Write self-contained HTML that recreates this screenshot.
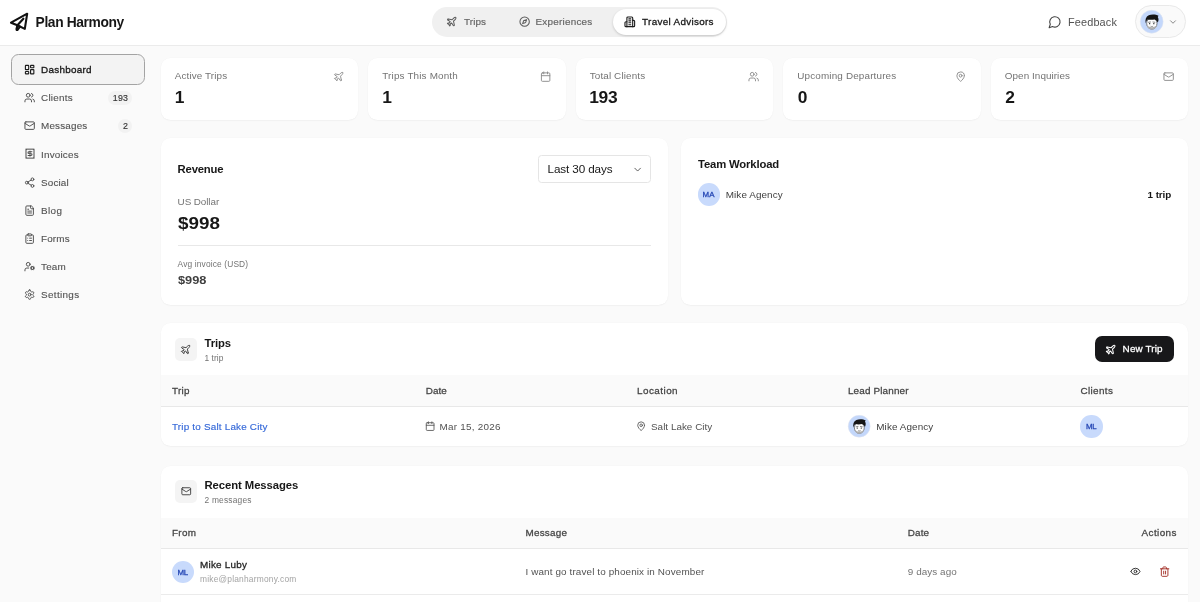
<!DOCTYPE html>
<html lang="en"><head><meta charset="utf-8"><title>Plan Harmony – Dashboard</title><style>
*{box-sizing:border-box;margin:0;padding:0}
html,body{width:1200px;height:602px;overflow:hidden}
body{background:#fafafa;font-family:"Liberation Sans", sans-serif;position:relative;color:#171717;-webkit-font-smoothing:antialiased}
header{position:absolute;left:0;top:0;width:1200px;height:45.6px;background:#fff;border-bottom:1px solid #ebebeb}
aside,main,nav{position:absolute;left:0;top:0;width:0;height:0}
#app{position:absolute;left:0;top:0;width:1200px;height:602px;will-change:transform}
.abs,.ic,.t{position:absolute;display:block}
.ic{overflow:visible}
.t{white-space:nowrap;line-height:1;font-weight:400;text-decoration:none}
a{color:inherit;text-decoration:none}
</style></head>
<body>
<div id="app">
<header><svg class="ic" style="left:0;top:0;width:45px;height:45px;color:#111" viewBox="0 0 45 45" fill="none" stroke="currentColor" stroke-width="2.1" stroke-linecap="round" stroke-linejoin="round"><path d="M27.200 13.700 11 22.700 17.400 25.300 24.800 28.900Z"/><path d="M23.400 18.700 17.400 25.300"/><path d="M17.400 25.300 16.500 29c-.100 1 .600 1.300 1.200.700l2.300-3"/></svg><strong class="t" style="left:35.60px;top:16.02px;font-size:13.8px;color:#171717;font-weight:700;letter-spacing:-0.382px;">Plan Harmony</strong><div class="abs" style="left:432.00px;top:6.50px;width:295.00px;height:30.40px;border-radius:15.2px;background:#f0f0f0"></div><nav><svg class="ic" style="left:446.00px;top:16.00px;width:11.25px;height:11.25px;color:#5a5a5a" viewBox="0 0 24 24" fill="none" stroke="currentColor" stroke-width="2.2" stroke-linecap="round" stroke-linejoin="round"><path d="M17.800 19.200 16 11l3.500-3.500C21 6 21.500 4 21 3c-1-.500-3 0-4.500 1.500L13 8 4.800 6.200c-.500-.100-.900.100-1.100.500l-.300.500c-.200.500-.100 1 .300 1.300L9 12l-2 3H4l-1 1 3 2 2 3 1-1v-3l3-2 3.500 5.300c.300.400.800.500 1.300.300l.500-.200c.400-.300.600-.700.500-1.200z"/></svg><span class="t" style="left:464.00px;top:17.02px;font-size:9.9px;color:#666;letter-spacing:0.115px;-webkit-text-stroke:0.18px currentColor;">Trips</span><svg class="ic" style="left:518.60px;top:16.00px;width:11.25px;height:11.25px;color:#5a5a5a" viewBox="0 0 24 24" fill="none" stroke="currentColor" stroke-width="2.2" stroke-linecap="round" stroke-linejoin="round"><circle cx="12" cy="12" r="10"/><path d="m16.240 7.760-1.804 5.411a2 2 0 0 1-1.265 1.265L7.760 16.240l1.804-5.411a2 2 0 0 1 1.265-1.265z"/></svg><span class="t" style="left:535.50px;top:17.02px;font-size:9.9px;color:#666;letter-spacing:0.240px;-webkit-text-stroke:0.18px currentColor;">Experiences</span><div class="abs" style="left:612.50px;top:8.50px;width:113.20px;height:26.20px;border-radius:13.1px;background:#fff;box-shadow:0 1px 2.5px rgba(0,0,0,.18)"></div><svg class="ic" style="left:624.40px;top:15.90px;width:11.60px;height:11.60px;color:#1c1c1c" viewBox="0 0 24 24" fill="none" stroke="currentColor" stroke-width="2.3" stroke-linecap="round" stroke-linejoin="round"><path d="M6 22V4a2 2 0 0 1 2-2h8a2 2 0 0 1 2 2v18Z"/><path d="M6 12H4a2 2 0 0 0-2 2v6a2 2 0 0 0 2 2h2"/><path d="M18 9h2a2 2 0 0 1 2 2v9a2 2 0 0 1-2 2h-2"/><path d="M10 6h4"/><path d="M10 10h4"/><path d="M10 14h4"/><path d="M10 18h4"/></svg><span class="t" style="left:642.10px;top:17.02px;font-size:9.9px;color:#171717;letter-spacing:0.304px;-webkit-text-stroke:0.3px currentColor;">Travel Advisors</span></nav><svg class="ic" style="left:1047.50px;top:15.00px;width:13.80px;height:13.80px;color:#444" viewBox="0 0 24 24" fill="none" stroke="currentColor" stroke-width="1.9" stroke-linecap="round" stroke-linejoin="round"><path d="M7.900 20A9 9 0 1 0 4 16.100L2 22Z"/></svg><span class="t" style="left:1068.00px;top:17.02px;font-size:10.9px;color:#525252;letter-spacing:0.145px;">Feedback</span><div class="abs" style="left:1135.30px;top:5.30px;width:50.60px;height:32.60px;border-radius:16.3px;background:#fafafa;border:1px solid #e9e9e9"></div><svg class="ic" style="left:1139.80px;top:9.80px;width:23.40px;height:23.40px" viewBox="0 0 48 48"><circle cx="24" cy="24" r="23.500" fill="#c3d7fb" stroke="#e3e6ee" stroke-width="1"/><ellipse cx="24.300" cy="27.500" rx="10.600" ry="11.800" fill="#fdfdfd" stroke="#3a3a3a" stroke-width="1.300"/><path d="M13.600 30c.500 7 5.500 10 10.700 10s10.200-3 10.700-10c-2 4-6 5.500-10.700 5.500S15.600 34 13.600 30z" fill="#b0b0b0"/><path d="M11.800 27.500C10 20 12 13.500 18 10.800c6-2.300 15-1.800 20 1.200l-1.600 2.200c2.200 3 2.200 8-.200 11.300-1.700-3.200-3.700-5.200-6-6-5 .800-10.700.800-14.500 0-2 1.700-3 4.500-3.900 8z" fill="#151515"/><circle cx="19.800" cy="28" r="1.400" fill="#222"/><circle cx="28.400" cy="28" r="1.400" fill="#222"/><path d="M17.500 25.200l4-.600M26.500 24.600l4 .600" stroke="#222" stroke-width="1.100" stroke-linecap="round" fill="none"/><path d="M22.300 33.600c1.300.700 2.800.700 4 0" stroke="#444" stroke-width="1.100" fill="none" stroke-linecap="round"/></svg><svg class="ic" style="left:1168.05px;top:16.60px;width:10.00px;height:10.00px;color:#6a6a6a" viewBox="0 0 24 24" fill="none" stroke="currentColor" stroke-width="1.9" stroke-linecap="round" stroke-linejoin="round"><path d="m6 9 6 6 6-6"/></svg></header>
<aside><div class="abs" style="left:10.70px;top:54.30px;width:134.80px;height:30.40px;border-radius:7.5px;background:#f3f3f3;border:1.4px solid #a3a3a3"></div><a><svg class="ic" style="left:23.90px;top:64.00px;width:11.25px;height:11.25px;color:#1c1c1c" viewBox="0 0 24 24" fill="none" stroke="currentColor" stroke-width="2.4" stroke-linecap="round" stroke-linejoin="round"><rect width="7" height="9" x="3" y="3" rx="1"/><rect width="7" height="5" x="14" y="3" rx="1"/><rect width="7" height="9" x="14" y="12" rx="1"/><rect width="7" height="5" x="3" y="16" rx="1"/></svg><span class="t" style="left:41.05px;top:65.02px;font-size:9.9px;color:#171717;letter-spacing:0.260px;-webkit-text-stroke:0.32px currentColor;">Dashboard</span></a><a><svg class="ic" style="left:23.90px;top:92.14px;width:11.25px;height:11.25px;color:#4d4d4d" viewBox="0 0 24 24" fill="none" stroke="currentColor" stroke-width="2.05" stroke-linecap="round" stroke-linejoin="round"><path d="M16 21v-2a4 4 0 0 0-4-4H6a4 4 0 0 0-4 4v2"/><circle cx="9" cy="7" r="4"/><path d="M22 21v-2a4 4 0 0 0-3-3.870"/><path d="M16 3.130a4 4 0 0 1 0 7.750"/></svg><span class="t" style="left:41.05px;top:93.02px;font-size:9.9px;color:#525252;letter-spacing:0.226px;-webkit-text-stroke:0.12px currentColor;">Clients</span></a><a><svg class="ic" style="left:23.90px;top:120.28px;width:11.25px;height:11.25px;color:#4d4d4d" viewBox="0 0 24 24" fill="none" stroke="currentColor" stroke-width="2.05" stroke-linecap="round" stroke-linejoin="round"><rect width="20" height="16" x="2" y="4" rx="2"/><path d="m22 7-8.970 5.700a1.940 1.940 0 0 1-2.060 0L2 7"/></svg><span class="t" style="left:41.05px;top:121.02px;font-size:9.9px;color:#525252;letter-spacing:0.176px;-webkit-text-stroke:0.12px currentColor;">Messages</span></a><a><svg class="ic" style="left:23.55px;top:148.42px;width:12.00px;height:11.25px;color:#4d4d4d" viewBox="0 0 24 24" preserveAspectRatio="none" fill="none" stroke="currentColor" stroke-width="2.05" stroke-linecap="round" stroke-linejoin="round"><path d="M4 2v20l2-1 2 1 2-1 2 1 2-1 2 1 2-1 2 1V2l-2 1-2-1-2 1-2-1-2 1-2-1-2 1Z"/><path d="M16 8h-6a2 2 0 1 0 0 4h4a2 2 0 1 1 0 4H8"/><path d="M12 17.500v-11"/></svg><span class="t" style="left:41.05px;top:150.02px;font-size:9.9px;color:#525252;letter-spacing:0.187px;-webkit-text-stroke:0.12px currentColor;">Invoices</span></a><a><svg class="ic" style="left:23.90px;top:176.56px;width:11.25px;height:11.25px;color:#4d4d4d" viewBox="0 0 24 24" fill="none" stroke="currentColor" stroke-width="2.05" stroke-linecap="round" stroke-linejoin="round"><circle cx="18" cy="5" r="3"/><circle cx="6" cy="12" r="3"/><circle cx="18" cy="19" r="3"/><line x1="8.590" x2="15.420" y1="13.510" y2="17.490"/><line x1="15.410" x2="8.590" y1="6.510" y2="10.490"/></svg><span class="t" style="left:41.05px;top:178.02px;font-size:9.9px;color:#525252;letter-spacing:0.140px;-webkit-text-stroke:0.12px currentColor;">Social</span></a><a><svg class="ic" style="left:23.90px;top:204.70px;width:11.25px;height:11.25px;color:#4d4d4d" viewBox="0 0 24 24" fill="none" stroke="currentColor" stroke-width="2.05" stroke-linecap="round" stroke-linejoin="round"><path d="M15 2H6a2 2 0 0 0-2 2v16a2 2 0 0 0 2 2h12a2 2 0 0 0 2-2V7Z"/><path d="M14 2v4a2 2 0 0 0 2 2h4"/><path d="M10 9H8"/><path d="M16 13H8"/><path d="M16 17H8"/></svg><span class="t" style="left:41.05px;top:206.02px;font-size:9.9px;color:#525252;letter-spacing:0.376px;-webkit-text-stroke:0.12px currentColor;">Blog</span></a><a><svg class="ic" style="left:23.90px;top:232.84px;width:11.25px;height:11.25px;color:#4d4d4d" viewBox="0 0 24 24" fill="none" stroke="currentColor" stroke-width="2.05" stroke-linecap="round" stroke-linejoin="round"><rect width="8" height="4" x="8" y="2" rx="1" ry="1"/><path d="M16 4h2a2 2 0 0 1 2 2v14a2 2 0 0 1-2 2H6a2 2 0 0 1-2-2V6a2 2 0 0 1 2-2h2"/><path d="M12 11h4"/><path d="M12 16h4"/><path d="M8 11h.01"/><path d="M8 16h.01"/></svg><span class="t" style="left:41.05px;top:234.02px;font-size:9.9px;color:#525252;letter-spacing:0.140px;-webkit-text-stroke:0.12px currentColor;">Forms</span></a><a><svg class="ic" style="left:23.90px;top:260.98px;width:11.25px;height:11.25px;color:#4d4d4d" viewBox="0 0 24 24" fill="none" stroke="currentColor" stroke-width="2.05" stroke-linecap="round" stroke-linejoin="round"><circle cx="18" cy="15" r="3"/><circle cx="9" cy="7" r="4"/><path d="M10 15H6a4 4 0 0 0-4 4v2"/><path d="m21.700 16.400-.900-.300"/><path d="m15.200 13.900-.900-.300"/><path d="m16.600 18.700.300-.900"/><path d="m19.100 12.200.300-.900"/><path d="m19.600 18.700-.400-1"/><path d="m16.800 12.300-.400-1"/><path d="m14.300 16.600 1-.400"/><path d="m20.700 13.800 1-.400"/></svg><span class="t" style="left:41.05px;top:262.02px;font-size:9.9px;color:#525252;letter-spacing:0.160px;-webkit-text-stroke:0.12px currentColor;">Team</span></a><a><svg class="ic" style="left:23.90px;top:289.12px;width:11.25px;height:11.25px;color:#4d4d4d" viewBox="0 0 24 24" fill="none" stroke="currentColor" stroke-width="2.05" stroke-linecap="round" stroke-linejoin="round"><path d="M12.220 2h-.440a2 2 0 0 0-2 2v.180a2 2 0 0 1-1 1.730l-.430.250a2 2 0 0 1-2 0l-.150-.080a2 2 0 0 0-2.730.730l-.220.380a2 2 0 0 0 .730 2.730l.150.100a2 2 0 0 1 1 1.720v.510a2 2 0 0 1-1 1.740l-.150.090a2 2 0 0 0-.730 2.730l.220.380a2 2 0 0 0 2.730.730l.150-.080a2 2 0 0 1 2 0l.430.250a2 2 0 0 1 1 1.730V20a2 2 0 0 0 2 2h.440a2 2 0 0 0 2-2v-.180a2 2 0 0 1 1-1.730l.430-.250a2 2 0 0 1 2 0l.150.080a2 2 0 0 0 2.730-.730l.220-.390a2 2 0 0 0-.730-2.730l-.150-.080a2 2 0 0 1-1-1.740v-.500a2 2 0 0 1 1-1.740l.150-.090a2 2 0 0 0 .730-2.730l-.220-.380a2 2 0 0 0-2.730-.730l-.150.080a2 2 0 0 1-2 0l-.430-.250a2 2 0 0 1-1-1.730V4a2 2 0 0 0-2-2z"/><circle cx="12" cy="12" r="3"/></svg><span class="t" style="left:41.05px;top:290.02px;font-size:9.9px;color:#525252;letter-spacing:0.337px;-webkit-text-stroke:0.12px currentColor;">Settings</span></a><div class="abs" style="left:108.00px;top:91.00px;width:24.20px;height:14.00px;border-radius:7px;background:#f2f2f2"></div><span class="t" style="left:112.70px;top:94.02px;font-size:8.8px;color:#333;letter-spacing:0.308px;-webkit-text-stroke:0.15px currentColor;">193</span><div class="abs" style="left:118.40px;top:119.10px;width:13.80px;height:14.00px;border-radius:7px;background:#f2f2f2"></div><span class="t" style="left:122.90px;top:122.02px;font-size:8.8px;color:#333;-webkit-text-stroke:0.15px currentColor;">2</span></aside>
<main><div class="abs card" style="left:160.60px;top:57.60px;width:197.50px;height:62.20px;background:#fff;border-radius:9.6px;box-shadow:0 0 0 .6px rgba(0,0,0,.02),0 1px 1.5px rgba(0,0,0,.035)"></div><span class="t" style="left:174.75px;top:71.02px;font-size:9.9px;color:#737373;letter-spacing:0.121px;">Active Trips</span><strong class="t" style="left:174.75px;top:89.02px;font-size:17.4px;color:#171717;font-weight:700;">1</strong><svg class="ic" style="left:332.90px;top:70.70px;width:11.25px;height:11.25px;color:#8c8c8c" viewBox="0 0 24 24" fill="none" stroke="currentColor" stroke-width="2.0" stroke-linecap="round" stroke-linejoin="round"><path d="M17.800 19.200 16 11l3.500-3.500C21 6 21.500 4 21 3c-1-.500-3 0-4.500 1.500L13 8 4.800 6.200c-.500-.100-.900.100-1.100.500l-.300.500c-.200.500-.100 1 .300 1.300L9 12l-2 3H4l-1 1 3 2 2 3 1-1v-3l3-2 3.500 5.300c.300.400.800.500 1.300.300l.500-.200c.400-.300.600-.700.500-1.200z"/></svg><div class="abs card" style="left:368.10px;top:57.60px;width:197.50px;height:62.20px;background:#fff;border-radius:9.6px;box-shadow:0 0 0 .6px rgba(0,0,0,.02),0 1px 1.5px rgba(0,0,0,.035)"></div><span class="t" style="left:382.25px;top:71.02px;font-size:9.9px;color:#737373;letter-spacing:0.168px;">Trips This Month</span><strong class="t" style="left:382.25px;top:89.02px;font-size:17.4px;color:#171717;font-weight:700;">1</strong><svg class="ic" style="left:540.10px;top:70.70px;width:11.25px;height:11.25px;color:#8c8c8c" viewBox="0 0 24 24" fill="none" stroke="currentColor" stroke-width="2.0" stroke-linecap="round" stroke-linejoin="round"><path d="M8 2v4"/><path d="M16 2v4"/><rect width="18" height="18" x="3" y="4" rx="2"/><path d="M3 10h18"/></svg><div class="abs card" style="left:575.60px;top:57.60px;width:197.50px;height:62.20px;background:#fff;border-radius:9.6px;box-shadow:0 0 0 .6px rgba(0,0,0,.02),0 1px 1.5px rgba(0,0,0,.035)"></div><span class="t" style="left:589.75px;top:71.02px;font-size:9.9px;color:#737373;letter-spacing:0.129px;">Total Clients</span><strong class="t" style="left:589.25px;top:89.02px;font-size:17.4px;color:#171717;font-weight:700;letter-spacing:-0.322px;">193</strong><svg class="ic" style="left:747.90px;top:70.70px;width:11.25px;height:11.25px;color:#8c8c8c" viewBox="0 0 24 24" fill="none" stroke="currentColor" stroke-width="2.0" stroke-linecap="round" stroke-linejoin="round"><path d="M16 21v-2a4 4 0 0 0-4-4H6a4 4 0 0 0-4 4v2"/><circle cx="9" cy="7" r="4"/><path d="M22 21v-2a4 4 0 0 0-3-3.870"/><path d="M16 3.130a4 4 0 0 1 0 7.750"/></svg><div class="abs card" style="left:783.10px;top:57.60px;width:197.50px;height:62.20px;background:#fff;border-radius:9.6px;box-shadow:0 0 0 .6px rgba(0,0,0,.02),0 1px 1.5px rgba(0,0,0,.035)"></div><span class="t" style="left:797.25px;top:71.02px;font-size:9.9px;color:#737373;letter-spacing:0.160px;">Upcoming Departures</span><strong class="t" style="left:797.75px;top:89.02px;font-size:17.4px;color:#171717;font-weight:700;">0</strong><svg class="ic" style="left:955.40px;top:70.70px;width:11.25px;height:11.25px;color:#8c8c8c" viewBox="0 0 24 24" fill="none" stroke="currentColor" stroke-width="2.0" stroke-linecap="round" stroke-linejoin="round"><path d="M20 10c0 4.993-5.539 10.193-7.399 11.799a1 1 0 0 1-1.202 0C9.539 20.193 4 14.993 4 10a8 8 0 0 1 16 0"/><circle cx="12" cy="10" r="3"/></svg><div class="abs card" style="left:990.60px;top:57.60px;width:197.50px;height:62.20px;background:#fff;border-radius:9.6px;box-shadow:0 0 0 .6px rgba(0,0,0,.02),0 1px 1.5px rgba(0,0,0,.035)"></div><span class="t" style="left:1004.75px;top:71.02px;font-size:9.9px;color:#737373;letter-spacing:0.070px;">Open Inquiries</span><strong class="t" style="left:1005.25px;top:89.02px;font-size:17.4px;color:#171717;font-weight:700;">2</strong><svg class="ic" style="left:1162.90px;top:70.70px;width:11.25px;height:11.25px;color:#8c8c8c" viewBox="0 0 24 24" fill="none" stroke="currentColor" stroke-width="2.0" stroke-linecap="round" stroke-linejoin="round"><rect width="20" height="16" x="2" y="4" rx="2"/><path d="m22 7-8.970 5.700a1.940 1.940 0 0 1-2.060 0L2 7"/></svg><div class="abs card" style="left:160.60px;top:137.60px;width:507.00px;height:167.20px;background:#fff;border-radius:9.6px;box-shadow:0 0 0 .6px rgba(0,0,0,.02),0 1px 1.5px rgba(0,0,0,.035)"></div><strong class="t" style="left:177.60px;top:164.02px;font-size:11.3px;color:#171717;font-weight:700;letter-spacing:-0.201px;">Revenue</strong><div class="abs" style="left:538.25px;top:155.00px;width:112.50px;height:27.75px;border-radius:3.5px;background:#fff;border:1px solid #e5e5e5"></div><span class="t" style="left:547.50px;top:163.02px;font-size:11.7px;color:#171717;letter-spacing:-0.107px;">Last 30 days</span><svg class="ic" style="left:631.50px;top:163.80px;width:11.25px;height:11.25px;color:#444" viewBox="0 0 24 24" fill="none" stroke="currentColor" stroke-width="1.8" stroke-linecap="round" stroke-linejoin="round"><path d="m6 9 6 6 6-6"/></svg><span class="t" style="left:177.60px;top:197.02px;font-size:9.9px;color:#737373;letter-spacing:-0.083px;">US Dollar</span><strong class="t" style="left:177.60px;top:216.02px;font-size:16.8px;color:#171717;font-weight:700;transform:scaleX(1.1217);transform-origin:0 0;">$998</strong><div class="abs" style="left:177.60px;top:245.00px;width:473.20px;height:1.00px;background:#e8e8e8"></div><span class="t" style="left:177.60px;top:260.02px;font-size:8.4px;color:#737373;letter-spacing:0.139px;">Avg invoice (USD)</span><strong class="t" style="left:177.60px;top:274.02px;font-size:11.7px;color:#404040;font-weight:700;transform:scaleX(1.0943);transform-origin:0 0;">$998</strong><div class="abs card" style="left:681.20px;top:137.60px;width:507.00px;height:167.20px;background:#fff;border-radius:9.6px;box-shadow:0 0 0 .6px rgba(0,0,0,.02),0 1px 1.5px rgba(0,0,0,.035)"></div><strong class="t" style="left:698.00px;top:159.02px;font-size:11.3px;color:#171717;font-weight:700;letter-spacing:-0.160px;">Team Workload</strong><div class="abs" style="left:697.50px;top:183.00px;width:22.50px;height:22.50px;border-radius:50%;background:#c8dafc"></div><span class="t" style="left:702.50px;top:191.02px;font-size:7.9px;color:#2446b4;letter-spacing:0.177px;-webkit-text-stroke:0.28px currentColor;">MA</span><span class="t" style="left:725.75px;top:190.02px;font-size:9.9px;color:#404040;letter-spacing:0.091px;">Mike Agency</span><strong class="t" style="left:1147.60px;top:190.02px;font-size:9.9px;color:#171717;font-weight:700;letter-spacing:-0.102px;">1 trip</strong><div class="abs card" style="left:160.60px;top:323.00px;width:1027.60px;height:123.30px;background:#fff;border-radius:9.6px;box-shadow:0 0 0 .6px rgba(0,0,0,.02),0 1px 1.5px rgba(0,0,0,.035);overflow:hidden"><div class="abs" style="left:0.00px;top:52.00px;width:1027.60px;height:31.50px;background:#fafafa;border-bottom:1px solid #e8e8e8"></div></div><div class="abs" style="left:174.50px;top:338.00px;width:22.50px;height:22.50px;border-radius:5px;background:#f4f4f4"></div><svg class="ic" style="left:180.20px;top:343.70px;width:11.10px;height:11.10px;color:#3d3d3d" viewBox="0 0 24 24" fill="none" stroke="currentColor" stroke-width="2.1" stroke-linecap="round" stroke-linejoin="round"><path d="M17.800 19.200 16 11l3.500-3.500C21 6 21.500 4 21 3c-1-.500-3 0-4.500 1.500L13 8 4.800 6.200c-.500-.100-.900.100-1.100.500l-.300.500c-.200.500-.100 1 .300 1.300L9 12l-2 3H4l-1 1 3 2 2 3 1-1v-3l3-2 3.500 5.300c.300.400.800.500 1.300.300l.500-.200c.400-.300.600-.700.500-1.200z"/></svg><strong class="t" style="left:204.50px;top:338.02px;font-size:11.3px;color:#171717;font-weight:700;letter-spacing:-0.116px;">Trips</strong><span class="t" style="left:204.50px;top:354.02px;font-size:8.4px;color:#737373;letter-spacing:0.058px;">1 trip</span><div class="abs" style="left:1094.60px;top:336.30px;width:79.50px;height:25.70px;border-radius:7px;background:#18181a"></div><svg class="ic" style="left:1105.20px;top:344.10px;width:11.25px;height:11.25px;color:#fff" viewBox="0 0 24 24" fill="none" stroke="currentColor" stroke-width="2.3" stroke-linecap="round" stroke-linejoin="round"><path d="M17.800 19.200 16 11l3.500-3.500C21 6 21.500 4 21 3c-1-.500-3 0-4.500 1.500L13 8 4.800 6.200c-.500-.100-.900.100-1.100.500l-.300.500c-.200.500-.100 1 .300 1.300L9 12l-2 3H4l-1 1 3 2 2 3 1-1v-3l3-2 3.500 5.300c.300.400.800.500 1.300.300l.500-.200c.400-.300.600-.700.500-1.200z"/></svg><span class="t" style="left:1122.60px;top:344.02px;font-size:9.9px;color:#fff;letter-spacing:0.151px;-webkit-text-stroke:0.3px currentColor;">New Trip</span><span class="t" style="left:172.00px;top:386.02px;font-size:9.9px;color:#454545;letter-spacing:0.284px;-webkit-text-stroke:0.28px currentColor;">Trip</span><span class="t" style="left:425.70px;top:386.02px;font-size:9.9px;color:#454545;letter-spacing:0.078px;-webkit-text-stroke:0.28px currentColor;">Date</span><span class="t" style="left:637.10px;top:386.02px;font-size:9.9px;color:#454545;letter-spacing:0.451px;-webkit-text-stroke:0.28px currentColor;">Location</span><span class="t" style="left:847.90px;top:386.02px;font-size:9.9px;color:#454545;letter-spacing:0.172px;-webkit-text-stroke:0.28px currentColor;">Lead Planner</span><span class="t" style="left:1080.40px;top:386.02px;font-size:9.9px;color:#454545;letter-spacing:0.392px;-webkit-text-stroke:0.28px currentColor;">Clients</span><span class="t" style="left:172.00px;top:422.02px;font-size:9.9px;color:#3468d8;letter-spacing:0.198px;-webkit-text-stroke:0.15px currentColor;">Trip to Salt Lake City</span><svg class="ic" style="left:425.20px;top:420.90px;width:10.30px;height:10.30px;color:#555" viewBox="0 0 24 24" fill="none" stroke="currentColor" stroke-width="2" stroke-linecap="round" stroke-linejoin="round"><path d="M8 2v4"/><path d="M16 2v4"/><rect width="18" height="18" x="3" y="4" rx="2"/><path d="M3 10h18"/></svg><span class="t" style="left:439.50px;top:422.02px;font-size:9.9px;color:#525252;letter-spacing:0.264px;">Mar 15, 2026</span><svg class="ic" style="left:636.30px;top:420.90px;width:10.30px;height:10.30px;color:#555" viewBox="0 0 24 24" fill="none" stroke="currentColor" stroke-width="2" stroke-linecap="round" stroke-linejoin="round"><path d="M20 10c0 4.993-5.539 10.193-7.399 11.799a1 1 0 0 1-1.202 0C9.539 20.193 4 14.993 4 10a8 8 0 0 1 16 0"/><circle cx="12" cy="10" r="3"/></svg><span class="t" style="left:651.00px;top:422.02px;font-size:9.9px;color:#525252;letter-spacing:0.024px;">Salt Lake City</span><svg class="ic" style="left:847.80px;top:415.30px;width:22.40px;height:22.40px" viewBox="0 0 48 48"><circle cx="24" cy="24" r="23.500" fill="#c3d7fb" stroke="#e3e6ee" stroke-width="1"/><ellipse cx="24.300" cy="27.500" rx="10.600" ry="11.800" fill="#fdfdfd" stroke="#3a3a3a" stroke-width="1.300"/><path d="M13.600 30c.500 7 5.500 10 10.700 10s10.200-3 10.700-10c-2 4-6 5.500-10.700 5.500S15.600 34 13.600 30z" fill="#b0b0b0"/><path d="M11.800 27.500C10 20 12 13.500 18 10.800c6-2.300 15-1.800 20 1.200l-1.600 2.200c2.200 3 2.200 8-.200 11.300-1.700-3.200-3.700-5.200-6-6-5 .800-10.700.800-14.500 0-2 1.700-3 4.500-3.900 8z" fill="#151515"/><circle cx="19.800" cy="28" r="1.400" fill="#222"/><circle cx="28.400" cy="28" r="1.400" fill="#222"/><path d="M17.500 25.200l4-.600M26.500 24.600l4 .600" stroke="#222" stroke-width="1.100" stroke-linecap="round" fill="none"/><path d="M22.300 33.600c1.300.700 2.800.700 4 0" stroke="#444" stroke-width="1.100" fill="none" stroke-linecap="round"/></svg><span class="t" style="left:876.25px;top:422.02px;font-size:9.9px;color:#404040;letter-spacing:0.106px;">Mike Agency</span><div class="abs" style="left:1080.40px;top:415.40px;width:22.50px;height:22.50px;border-radius:50%;background:#c8dafc"></div><span class="t" style="left:1086.00px;top:423.02px;font-size:7.9px;color:#2446b4;letter-spacing:-0.273px;-webkit-text-stroke:0.28px currentColor;">ML</span><div class="abs card" style="left:160.60px;top:465.80px;width:1027.60px;height:160.00px;background:#fff;border-radius:9.6px;box-shadow:0 0 0 .6px rgba(0,0,0,.02),0 1px 1.5px rgba(0,0,0,.035);overflow:hidden"><div class="abs" style="left:0.00px;top:52.10px;width:1027.60px;height:31.20px;background:#fafafa;border-bottom:1px solid #e8e8e8"></div><div class="abs" style="left:0.00px;top:128.20px;width:1027.60px;height:1.00px;background:#ebebeb"></div></div><div class="abs" style="left:174.50px;top:480.00px;width:22.50px;height:22.50px;border-radius:5px;background:#f4f4f4"></div><svg class="ic" style="left:180.50px;top:486.00px;width:10.50px;height:10.50px;color:#3d3d3d" viewBox="0 0 24 24" fill="none" stroke="currentColor" stroke-width="2.1" stroke-linecap="round" stroke-linejoin="round"><rect width="20" height="16" x="2" y="4" rx="2"/><path d="m22 7-8.970 5.700a1.940 1.940 0 0 1-2.060 0L2 7"/></svg><strong class="t" style="left:204.50px;top:480.02px;font-size:11.3px;color:#171717;font-weight:700;letter-spacing:-0.074px;">Recent Messages</strong><span class="t" style="left:204.50px;top:496.02px;font-size:8.4px;color:#737373;letter-spacing:0.198px;">2 messages</span><span class="t" style="left:172.00px;top:528.02px;font-size:9.9px;color:#454545;letter-spacing:0.312px;-webkit-text-stroke:0.28px currentColor;">From</span><span class="t" style="left:525.50px;top:528.02px;font-size:9.9px;color:#454545;letter-spacing:0.237px;-webkit-text-stroke:0.28px currentColor;">Message</span><span class="t" style="left:907.80px;top:528.02px;font-size:9.9px;color:#454545;letter-spacing:0.111px;-webkit-text-stroke:0.28px currentColor;">Date</span><span class="t" style="left:1141.60px;top:528.02px;font-size:9.9px;color:#454545;letter-spacing:0.409px;-webkit-text-stroke:0.28px currentColor;">Actions</span><div class="abs" style="left:171.75px;top:560.50px;width:22.50px;height:22.50px;border-radius:50%;background:#c8dafc"></div><span class="t" style="left:177.40px;top:569.02px;font-size:7.9px;color:#2446b4;letter-spacing:-0.273px;-webkit-text-stroke:0.28px currentColor;">ML</span><span class="t" style="left:200.00px;top:560.02px;font-size:9.9px;color:#262626;letter-spacing:0.241px;-webkit-text-stroke:0.3px currentColor;">Mike Luby</span><span class="t" style="left:200.00px;top:575.02px;font-size:8.4px;color:#a3a3a3;letter-spacing:0.216px;">mike@planharmony.com</span><span class="t" style="left:525.50px;top:567.02px;font-size:9.9px;color:#525252;letter-spacing:0.126px;">I want go travel to phoenix in November</span><span class="t" style="left:907.80px;top:567.02px;font-size:9.9px;color:#737373;letter-spacing:0.064px;">9 days ago</span><svg class="ic" style="left:1130.40px;top:566.30px;width:10.90px;height:10.90px;color:#2a2a2a" viewBox="0 0 24 24" fill="none" stroke="currentColor" stroke-width="2.1" stroke-linecap="round" stroke-linejoin="round"><path d="M2.062 12.348a1 1 0 0 1 0-.696 10.750 10.750 0 0 1 19.876 0 1 1 0 0 1 0 .696 10.750 10.750 0 0 1-19.876 0"/><circle cx="12" cy="12" r="3"/></svg><svg class="ic" style="left:1158.60px;top:566.20px;width:11.25px;height:11.25px;color:#a33028" viewBox="0 0 24 24" fill="none" stroke="currentColor" stroke-width="2.0" stroke-linecap="round" stroke-linejoin="round"><path d="M3 6h18"/><path d="M19 6v14c0 1-1 2-2 2H7c-1 0-2-1-2-2V6"/><path d="M8 6V4c0-1 1-2 2-2h4c1 0 2 1 2 2v2"/><line x1="10" x2="10" y1="11" y2="17"/><line x1="14" x2="14" y1="11" y2="17"/></svg></main>
</div>
</body></html>
